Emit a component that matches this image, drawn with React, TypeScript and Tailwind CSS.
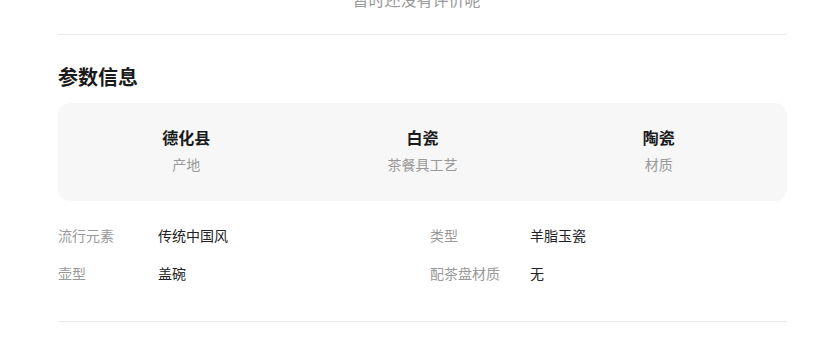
import React from 'react';

const summary = [
  { value: '德化县', label: '产地' },
  { value: '白瓷', label: '茶餐具工艺' },
  { value: '陶瓷', label: '材质' },
];

const specs = [
  { label: '流行元素', value: '传统中国风' },
  { label: '类型', value: '羊脂玉瓷' },
  { label: '壶型', value: '盖碗' },
  { label: '配茶盘材质', value: '无' },
];

export default function App() {
  return (
    <div
      className="w-[821px] h-[347px] overflow-hidden bg-white"
      style={{ fontFamily: '"Noto Sans CJK SC", "Noto Sans", sans-serif' }}
    >
      <div className="mx-[58px] w-[729px]">
        {/* empty reviews tail */}
        <div className="mt-[-13px] h-[24px] pr-[12px] text-center text-[16px] leading-[24px] text-[#999]">
          暂时还没有评价呢
        </div>
        <div className="mt-[23px] h-px bg-[#ebebeb]" />

        <h2 className="mt-[28px] text-[20px] leading-[28px] font-bold text-[#1a1a1a]">参数信息</h2>

        <div className="mt-[12px] h-[98px] rounded-[12px] bg-[#f7f7f7] px-[10px] pt-[22px] grid grid-cols-3 content-start">
          {summary.map((s) => (
            <div key={s.label} className="flex flex-col items-center">
              <span className="text-[16px] leading-[24px] font-bold text-[#1a1a1a]">{s.value}</span>
              <span className="mt-[5px] text-[14px] leading-[20px] text-[#999]">{s.label}</span>
            </div>
          ))}
        </div>

        <div className="mt-[24px] grid grid-cols-2 gap-x-[15px] gap-y-[18px]">
          {specs.map((s) => (
            <div key={s.label} className="flex text-[14px] leading-[20px]">
              <span className="w-[100px] shrink-0 text-[#999]">{s.label}</span>
              <span className="text-[#222]">{s.value}</span>
            </div>
          ))}
        </div>

        <div className="mt-[38px] h-px bg-[#ebebeb]" />
      </div>
    </div>
  );
}
